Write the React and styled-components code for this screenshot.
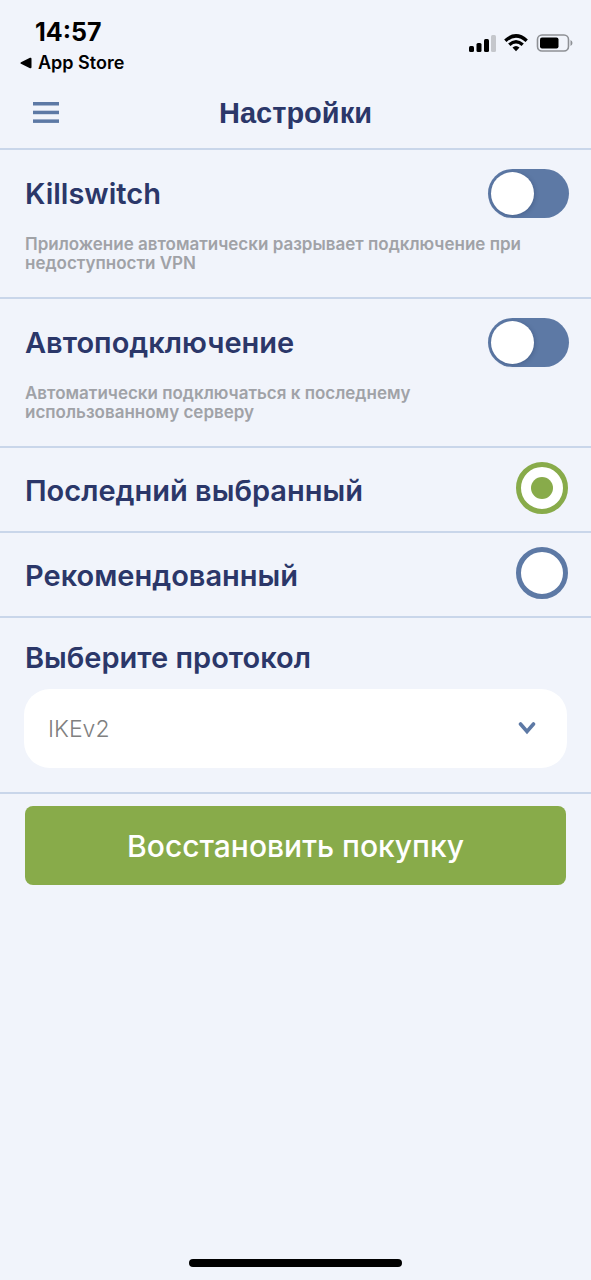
import React, { useState } from "react";
import styled, { createGlobalStyle } from "styled-components";

const navy = "#2b3769";
const blue = "#5d79a5";
const green = "#88ab4a";
const line = "#c9d6ea";

const GlobalStyle = createGlobalStyle`
  *, *::before, *::after { box-sizing: border-box; }
  body {
    margin: 0;
    background: #f1f4fb;
    color: ${navy};
    font-family: Inter, "Noto Sans", sans-serif;
  }
`;

const Screen = styled.div`
  display: flex;
  flex-direction: column;
  min-height: 100vh;
`;

const StatusBar = styled.div`
  display: flex;
  justify-content: space-between;
  height: 76px;
  padding: 18px 18px 0 20px;
  color: #000;
`;

const Clock = styled.div`
  padding-left: 15px;
  font-size: 25px;
  line-height: 28px;
  font-weight: 700;
`;

const BackLink = styled.a`
  display: flex;
  align-items: center;
  gap: 6px;
  margin-top: 4px;
  font-size: 18px;
  line-height: 26px;
  font-weight: 600;
  color: inherit;
  text-decoration: none;
`;

const StatusIcons = styled.div`
  display: flex;
  align-items: center;
  gap: 8px;
  height: 20px;
  margin-top: 15px;
`;

const Header = styled.header`
  display: grid;
  grid-template-columns: 42px 1fr 42px;
  align-items: center;
  height: 74px;
  padding: 0 25px;
  border-bottom: 2px solid ${line};
`;

const MenuButton = styled.button`
  display: flex;
  align-items: center;
  justify-content: center;
  height: 42px;
  padding: 0;
  border: 0;
  background: none;
  cursor: pointer;
`;

const Title = styled.h1`
  margin: 0;
  padding-top: 2px;
  font-family: "Liberation Sans", sans-serif;
  font-size: 29px;
  line-height: 36px;
  font-weight: 700;
  text-align: center;
`;

const Section = styled.section`
  padding: 19px 22px 24px 25px;
  border-bottom: 2px solid ${line};
`;

const Row = styled.div`
  display: flex;
  align-items: center;
  justify-content: space-between;
`;

const RadioRow = styled(Row)`
  height: 85px;
  padding: 0 22px 4px 25px;
  border-bottom: 2px solid ${line};
`;

const Label = styled.label`
  font-size: 29px;
  line-height: 36px;
  font-weight: 600;
`;

const RadioLabel = styled(Label)`
  padding-top: 6px;
`;

const Hint = styled.p`
  margin: 17px 0 0;
  max-width: ${(p) => p.$width};
  font-size: 17px;
  line-height: 19px;
  font-weight: 600;
  color: #a0a2a7;
`;

const Switch = styled.input`
  appearance: none;
  flex: none;
  display: flex;
  align-items: center;
  width: 81px;
  height: 49px;
  margin: 0;
  padding: 0 3px;
  border-radius: 25px;
  background: ${blue};
  cursor: pointer;

  &::before {
    content: "";
    width: 43px;
    height: 43px;
    border-radius: 50%;
    background: #fff;
    box-shadow: 1px 1px 4px rgba(30, 50, 90, 0.3);
  }
  &:checked {
    justify-content: flex-end;
    background: ${green};
  }
`;

const Radio = styled.input`
  appearance: none;
  flex: none;
  display: grid;
  place-items: center;
  width: 52px;
  height: 52px;
  margin: 0 1px 0 0;
  border: 5px solid ${blue};
  border-radius: 50%;
  background: #fff;
  cursor: pointer;

  &:checked { border-color: ${green}; }
  &:checked::before {
    content: "";
    width: 22px;
    height: 22px;
    border-radius: 50%;
    background: ${green};
  }
`;

const Protocol = styled.section`
  display: flex;
  flex-direction: column;
  gap: 13px;
  padding: 22px 24px 24px;
  border-bottom: 2px solid ${line};
`;

const ProtocolLabel = styled(Label)`
  padding-left: 1px;
`;

const SelectBox = styled.div`
  position: relative;

  svg {
    position: absolute;
    top: 32px;
    right: 31px;
    pointer-events: none;
  }
`;

const Select = styled.select`
  appearance: none;
  display: block;
  width: 100%;
  height: 79px;
  padding: 0 60px 0 24px;
  border: 0;
  border-radius: 26px;
  background: #fff;
  color: #808080;
  font-family: inherit;
  font-size: 23px;
  font-weight: 300;
`;

const Actions = styled.div`
  padding: 12px 25px;
`;

const RestoreButton = styled.button`
  width: 100%;
  height: 79px;
  border: 0;
  border-radius: 8px;
  background: ${green};
  color: #fff;
  font-family: inherit;
  font-size: 30px;
  font-weight: 500;
  cursor: pointer;
`;

const HomeIndicator = styled.div`
  align-self: center;
  width: 36%;
  height: 8px;
  margin: auto 0 13px;
  border-radius: 4px;
  background: #000;
`;

const toggles = [
  {
    id: "killswitch",
    title: "Killswitch",
    hint: "Приложение автоматически разрывает подключение при недоступности VPN",
    width: "510px",
  },
  {
    id: "autoconnect",
    title: "Автоподключение",
    hint: "Автоматически подключаться к последнему использованному серверу",
    width: "400px",
  },
];

const servers = [
  { id: "last", title: "Последний выбранный" },
  { id: "recommended", title: "Рекомендованный" },
];

export default function App() {
  const [server, setServer] = useState("last");

  return (
    <Screen>
      <GlobalStyle />
      <StatusBar>
        <div>
          <Clock>14:57</Clock>
          <BackLink href="#app-store">
            <svg width="12" height="12" viewBox="0 0 12 12" aria-hidden="true">
              <path d="M1 5.2 10 .8Q11.500 .2 11.500 2V10Q11.500 11.800 10 11.200L1 6.800Q-.2 6 1 5.200Z" />
            </svg>
            App Store
          </BackLink>
        </div>
        <StatusIcons aria-hidden="true">
          <svg width="27" height="17" viewBox="0 0 27 17">
            <rect x="0" y="11" width="5" height="6" rx="1.500" />
            <rect x="7.500" y="8" width="5" height="9" rx="1.500" />
            <rect x="15" y="4" width="5" height="13" rx="1.500" />
            <rect x="22" y="0" width="5" height="17" rx="1.500" fill="#c5c7cc" />
          </svg>
          <svg width="24" height="18" viewBox="0 0 24 18" fill="none" stroke="#000" strokeWidth="3.400">
            <path d="M1.300 6.700Q12-3 22.700 6.700" />
            <path d="M5.300 10.700Q12 4.700 18.700 10.700" />
            <path d="M8.500 13.600Q12 10.600 15.500 13.600L12 17.300Z" fill="#000" stroke="none" />
          </svg>
          <svg width="37" height="18" viewBox="0 0 37 18">
            <rect x="1.500" y="1" width="31" height="16" rx="4.500" fill="none" stroke="#8e9095" strokeWidth="1.600" />
            <rect x="4" y="3.500" width="18.500" height="11" rx="2" />
            <path d="M34.500 6Q36.500 7 36.500 9T34.500 12Z" fill="#8e9095" />
          </svg>
        </StatusIcons>
      </StatusBar>

      <Header>
        <MenuButton type="button" aria-label="Меню">
          <svg width="26" height="22" viewBox="0 0 26 22" fill={blue} aria-hidden="true">
            <rect y="1" width="26" height="3.500" />
            <rect y="9.700" width="26" height="3.500" />
            <rect y="18.400" width="26" height="3.500" />
          </svg>
        </MenuButton>
        <Title>Настройки</Title>
      </Header>

      <main>
        {toggles.map((t) => (
          <Section key={t.id}>
            <Row>
              <Label htmlFor={t.id}>{t.title}</Label>
              <Switch id={t.id} type="checkbox" role="switch" />
            </Row>
            <Hint $width={t.width}>{t.hint}</Hint>
          </Section>
        ))}

        {servers.map((s) => (
          <RadioRow key={s.id}>
            <RadioLabel htmlFor={s.id}>{s.title}</RadioLabel>
            <Radio
              id={s.id}
              type="radio"
              name="server"
              checked={server === s.id}
              onChange={() => setServer(s.id)}
            />
          </RadioRow>
        ))}

        <Protocol>
          <ProtocolLabel htmlFor="protocol">Выберите протокол</ProtocolLabel>
          <SelectBox>
            <Select id="protocol" defaultValue="IKEv2">
              <option>IKEv2</option>
            </Select>
            <svg width="18" height="15" viewBox="0 0 18 15" fill="none" stroke={blue} strokeWidth="3.600" strokeLinecap="round" aria-hidden="true">
              <path d="M2.500 3 9 10.500 15.500 3" />
            </svg>
          </SelectBox>
        </Protocol>

        <Actions>
          <RestoreButton type="button">Восстановить покупку</RestoreButton>
        </Actions>
      </main>

      <HomeIndicator />
    </Screen>
  );
}
